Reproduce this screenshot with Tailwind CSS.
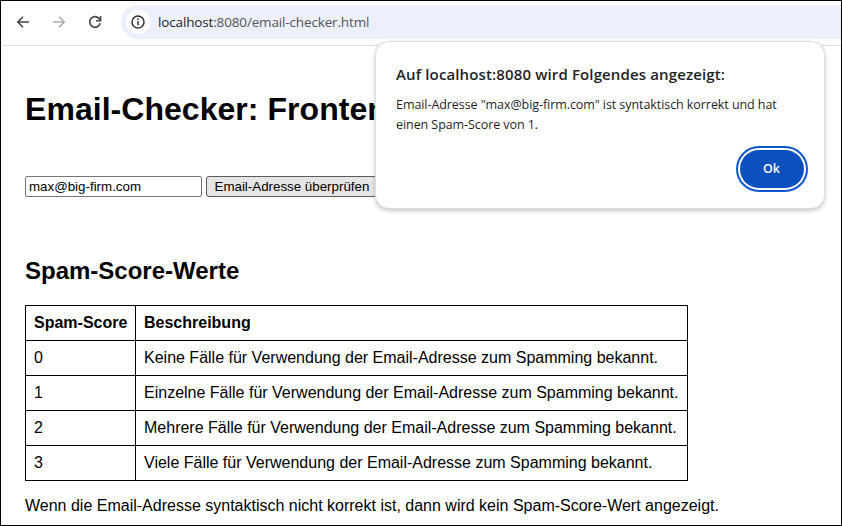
<!DOCTYPE html>
<html lang="de">
<head>
<meta charset="utf-8">
<title>Email-Checker</title>
<script src="https://cdn.jsdelivr.net/npm/@tailwindcss/browser@4"></script>
</head>
<body class="bg-white">
<div class="relative flex h-[526px] w-[842px] flex-col overflow-hidden border border-black bg-white font-['Liberation_Sans',Arial,sans-serif] text-black">
  <header class="flex h-[45px] shrink-0 items-start border-b border-[#dfe1e4] pt-1">
    <nav class="flex h-[34px] w-[120px] shrink-0 items-center gap-5 pl-[14px] text-[#474747]">
      <svg class="size-4" viewBox="0 0 16 16" fill="none" stroke="currentColor" stroke-width="1.6"><path d="M14 8H3M8 2.8L2.8 8L8 13.2"/></svg>
      <svg class="size-4 text-[#adadad]" viewBox="0 0 16 16" fill="none" stroke="currentColor" stroke-width="1.6"><path d="M2 8h11M8 2.8L13.2 8L8 13.2"/></svg>
      <svg class="size-4" viewBox="0 0 16 16" fill="none" stroke="currentColor" stroke-width="1.6"><path d="M13.2 9.2A5.3 5.3 0 1 1 12 4.4L13.6 6M13.6 2v4.7H9"/></svg>
    </nav>
    <div class="flex h-[34px] flex-1 items-center rounded-l-full bg-[#ecf0fa] pl-[5px]">
      <span class="flex size-6 items-center justify-center rounded-full bg-white">
        <svg class="size-[14px]" viewBox="0 0 14 14" fill="none" stroke="#333" stroke-width="1.5"><circle cx="7" cy="7" r="6"/><path d="M7 6v4.2M7 3.6v1.5"/></svg>
      </span>
      <span class="ml-2 whitespace-nowrap font-['Open_Sans',sans-serif] text-[13.5px] tracking-[-0.15px] text-[#54565a]"><span class="text-[#1f1f1f]">localhost</span>:8080/email-checker.html</span>
    </div>
  </header>
  <main class="flex flex-col items-start whitespace-nowrap px-6 pt-[45px]">
    <h1 class="text-[32px] leading-9 font-bold tracking-[0.04px]">Email-Checker: Frontend</h1>
    <form class="mt-[49px] flex gap-1">
      <input class="h-[21px] w-[177px] rounded-[2px] border border-[#767676] px-[3px] text-[13.333px]" value="max@big-firm.com">
      <button type="button" class="h-[21px] rounded-[3px] border border-[#5b5b5b] bg-[#e5e5e5] pr-[7px] pl-[7.5px] text-[13.333px] leading-[19px]">Email-Adresse überprüfen</button>
    </form>
    <h2 class="mt-[60px] text-2xl leading-7 font-bold">Spam-Score-Werte</h2>
    <table class="mt-5 h-[176px] w-[663px] table-fixed border-collapse text-left text-base [&_td]:border [&_td]:border-black [&_td]:px-2 [&_td]:py-0 [&_th]:border [&_th]:border-black [&_th]:px-2 [&_th]:py-0 [&_tr]:h-[35px]">
      <colgroup><col class="w-[110px]"><col></colgroup>
      <tr><th>Spam-Score</th><th>Beschreibung</th></tr>
      <tr><td>0</td><td>Keine Fälle für Verwendung der Email-Adresse zum Spamming bekannt.</td></tr>
      <tr><td>1</td><td>Einzelne Fälle für Verwendung der Email-Adresse zum Spamming bekannt.</td></tr>
      <tr><td>2</td><td>Mehrere Fälle für Verwendung der Email-Adresse zum Spamming bekannt.</td></tr>
      <tr><td>3</td><td>Viele Fälle für Verwendung der Email-Adresse zum Spamming bekannt.</td></tr>
    </table>
    <p class="mt-4 text-base leading-[18px]">Wenn die Email-Adresse syntaktisch nicht korrekt ist, dann wird kein Spam-Score-Wert angezeigt.</p>
  </main>
  <section role="dialog" class="absolute top-10 left-[374px] flex h-[168px] w-[450px] flex-col rounded-[14px] border border-[#dcdedf] bg-white px-5 font-['Open_Sans',sans-serif] whitespace-nowrap text-[#1f1f1f] shadow-[0_2px_4px_rgba(0,0,0,0.22)]">
    <h3 class="mt-[22px] text-[15px] leading-5 font-semibold tracking-[0.13px]">Auf localhost:8080 wird Folgendes angezeigt:</h3>
    <p class="mt-[11px] text-[12.5px] leading-5 tracking-[-0.07px]">Email-Adresse "max@big-firm.com" ist syntaktisch korrekt und hat<br>einen Spam-Score von 1.</p>
    <button type="button" class="mt-[15px] flex h-[38px] w-16 items-center justify-center self-end rounded-full bg-[#0b50bd] pr-0 pl-0 text-[12.5px] font-semibold text-white outline-2 outline-offset-2 outline-[#0b57d0]"><span class="mt-px mr-px">Ok</span></button>
  </section>
</div>
</body>
</html>
